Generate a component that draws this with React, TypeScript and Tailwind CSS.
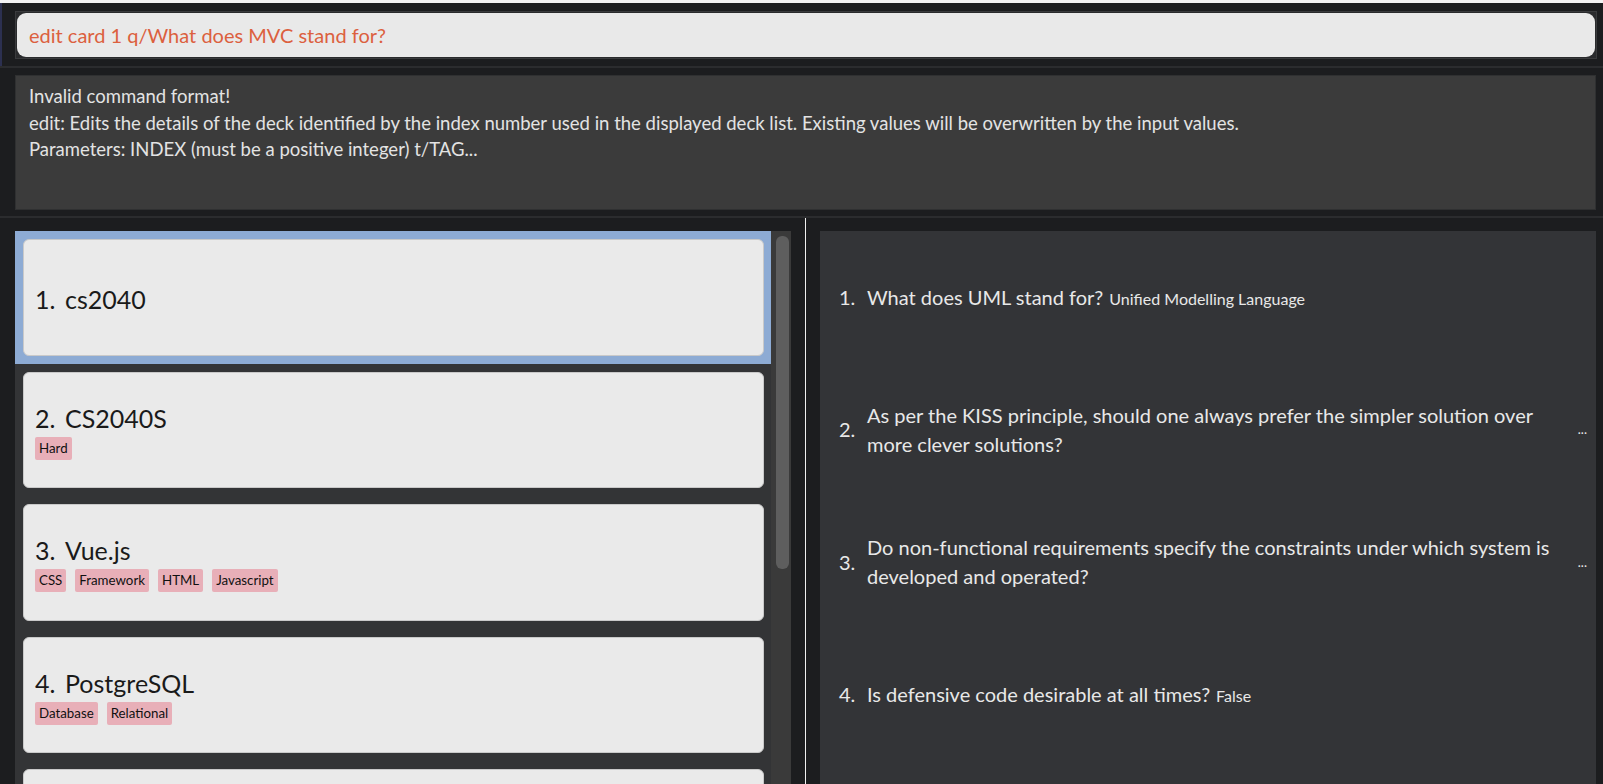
const decks = [
  { name: 'cs2040', tags: [] as string[] },
  { name: 'CS2040S', tags: ['Hard'] },
  { name: 'Vue.js', tags: ['CSS', 'Framework', 'HTML', 'Javascript'] },
  { name: 'PostgreSQL', tags: ['Database', 'Relational'] },
];

const cards = [
  { q: 'What does UML stand for?', a: 'Unified Modelling Language', cut: false },
  {
    q: 'As per the KISS principle, should one always prefer the simpler solution over more clever solutions?',
    a: '...',
    cut: true,
  },
  {
    q: 'Do non-functional requirements specify the constraints under which system is developed and operated?',
    a: '...',
    cut: true,
  },
  { q: 'Is defensive code desirable at all times?', a: 'False', cut: false },
];

function DeckCard({ index, name, tags, selected }: { index: number; name: string; tags: string[]; selected: boolean }) {
  return (
    <div className={`h-[132.5px] shrink-0 pl-[8px] pr-[7px] py-[8px] ${selected ? 'bg-[#8dabd4]' : ''}`}>
      <div className="h-full rounded-[6px] border border-[#c9c9c9] bg-[#eaeaea] px-[11px] pt-[3px] flex flex-col justify-center">
        <div className="flex items-center text-[25px] leading-[30px] text-[#1a1a1a]">
          <span className="w-[30px]">{index}.</span>
          <span>{name}</span>
        </div>
        {tags.length > 0 && (
          <div className="flex gap-[9px] mt-[4px]">
            {tags.map((t) => (
              <span key={t} className="h-[23px] px-[4px] rounded-[2px] bg-[#e8afb8] text-[13.3px] leading-[23px] text-[#111]">
                {t}
              </span>
            ))}
          </div>
        )}
      </div>
    </div>
  );
}

export default function App() {
  return (
    <div className="w-[1603px] h-[784px] overflow-hidden bg-[#1c1d1f] flex flex-col font-[Lato,sans-serif]">
      {/* window top edge */}
      <div className="h-[3px] bg-[#f2f2f2] shrink-0" />

      {/* Command box */}
      <div className="h-[63px] shrink-0 flex border-l-[2px] border-[#2c3050]">
        <div className="ml-[13px] mr-[6px] mt-[8px] h-[48px] flex-1 border border-[#3a3b3d] bg-[#2a2b2d] p-[1px]">
          <div className="h-full rounded-[9px] bg-[#e9e9e9] flex items-center pl-[12px] text-[20px] text-[#dc603e]">
            edit card 1 q/What does MVC stand for?
          </div>
        </div>
      </div>
      <div className="h-[2px] bg-[#2b2c2e] shrink-0" />

      {/* Result display */}
      <div className="h-[148px] shrink-0 pt-[7px] pl-[15px] pr-[7px]">
        <div className="h-[135px] border border-[#2f3031] bg-[#3b3b3b] pl-[13px] pt-[7px] text-[18.5px] leading-[26.7px] text-[#e3e3e3]">
          <div>Invalid command format!</div>
          <div>
            edit: Edits the details of the deck identified by the index number used in the displayed deck list. Existing
            values will be overwritten by the input values.
          </div>
          <div>Parameters: INDEX (must be a positive integer) t/TAG...</div>
        </div>
      </div>
      <div className="h-[2px] bg-[#2b2c2e] shrink-0" />

      {/* Main panels */}
      <div className="flex-1 flex min-h-0">
        {/* Deck list */}
        <div className="w-[776px] ml-[15px] mt-[13px] flex">
          <div className="flex-1 bg-[#333436] flex flex-col overflow-hidden">
            {decks.map((d, i) => (
              <DeckCard key={d.name} index={i + 1} name={d.name} tags={d.tags} selected={i === 0} />
            ))}
            {/* next card, scrolled below the fold */}
            <div className="h-[132.5px] shrink-0 pl-[8px] pr-[7px] py-[8px]">
              <div className="h-full rounded-[6px] border border-[#c9c9c9] bg-[#eaeaea]" />
            </div>
          </div>
          <div className="w-[20px] bg-[#3a3a3a] pl-[4.5px] pr-[2px] pt-[5px]">
            <div className="h-[333px] rounded-[6px] bg-[#5e5e5e]" />
          </div>
        </div>

        {/* divider */}
        <div className="w-[14px]" />
        <div className="w-[1px] bg-[#f0f0f0]" />
        <div className="w-[14px]" />

        {/* Card list */}
        <div className="w-[776px] mt-[13px] bg-[#333437] flex flex-col overflow-hidden text-[#e8e8e8]">
          {cards.map((c, i) => (
            <div key={i} className="h-[132.5px] shrink-0 flex items-center pl-[19px] pr-[9px]">
              <span className="w-[28px] shrink-0 text-[20px] leading-[29px]">{i + 1}.</span>
              {c.cut ? (
                <>
                  <span className="flex-1 min-w-0 text-[20px] leading-[29px]">{c.q}</span>
                  <span className="shrink-0 text-[13px] ml-[6px]">{c.a}</span>
                </>
              ) : (
                <>
                  <span className="text-[20px] leading-[29px]">{c.q}</span>
                  <span className="ml-[6px] text-[16px] leading-[29px] pt-[2px]">{c.a}</span>
                </>
              )}
            </div>
          ))}
        </div>
      </div>
    </div>
  );
}
